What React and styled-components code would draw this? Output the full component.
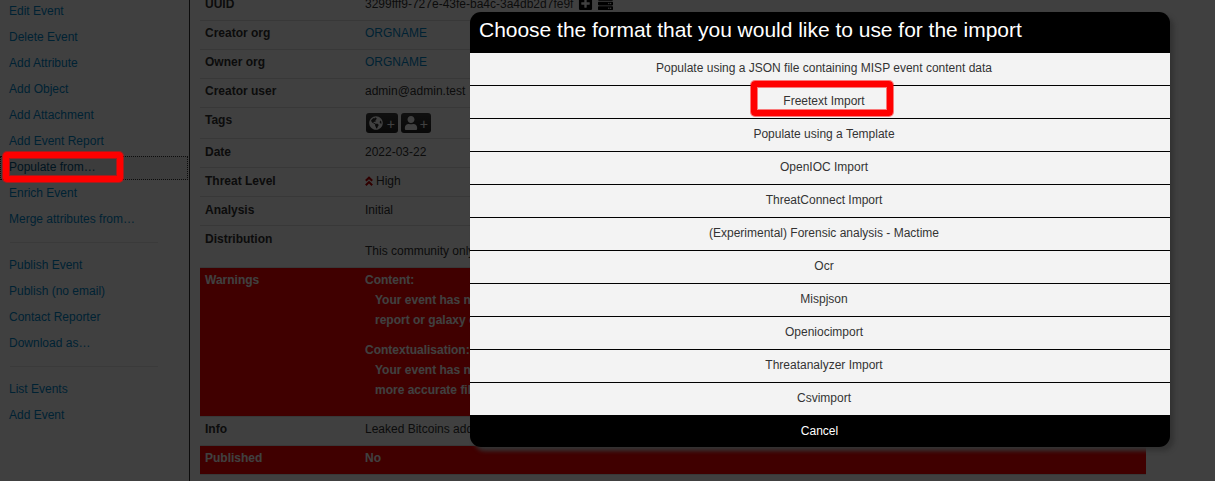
import React from 'react';
import styled, { createGlobalStyle } from 'styled-components';
import { FaGlobeAmericas, FaUser, FaPlusSquare, FaServer } from 'react-icons/fa';

const GlobalStyle = createGlobalStyle`
  * { box-sizing: border-box; }
  body {
    margin: 0;
    background: #fff;
    color: #333;
    font: 12px/20px "Liberation Sans", Arial, Helvetica, sans-serif;
  }
`;

const Page = styled.div`
  position: relative;
  display: flex;
  width: 1215px;
  height: 481px;
  overflow: hidden;
`;

const Sidebar = styled.nav`
  flex: none;
  width: 190px;
  height: 520px;
  margin-top: -2px;
  border-right: 1px solid #333;
`;

const MenuItem = styled.a`
  display: block;
  height: 26px;
  padding: 3px 9px;
  color: ${(p) => (p.$active ? '#005580' : '#0088cc')};
`;

const FocusItem = styled(MenuItem)`
  height: 24px;
  margin: 2px 1px 0 0;
  padding-top: 1px;
  background: #eee;
  outline: 1px dotted #333;
  outline-offset: -1px;
`;

const Divider = styled.hr`
  height: 1px;
  margin: 10px 31px 9px 10px;
  border: 0;
  background: #e5e5e5;
`;

const Details = styled.dl`
  flex: none;
  width: 946px;
  margin: -9px 0 0 10px;
`;

const Row = styled.div`
  display: flex;
  height: ${(p) => p.$height || 29}px;
  padding: ${(p) => (p.$low ? 3 : 2)}px 5px 0;
  border-top: 1px solid #ddd;
  color: ${(p) => (p.$alert ? '#fff' : '#333')};
  background: ${(p) => (p.$alert ? '#f00' : 'transparent')};
  font-weight: ${(p) => (p.$alert ? 'bold' : 'normal')};
`;

const Label = styled.dt`
  flex: none;
  width: 160px;
  font-weight: bold;
`;

const Value = styled.dd`
  flex: 1;
  margin: 0;
  padding-top: ${(p) => p.$drop || 0}px;
  white-space: nowrap;
`;

const OrgLink = styled.a`
  color: #08c;
`;

const UuidIcons = styled.span`
  display: inline-flex;
  gap: 5px;
  margin-left: 5px;
  vertical-align: -3px;
  color: #000;
  font-size: 15px;
`;

const TagButtons = styled.div`
  display: flex;
  gap: 3px;
  margin: 3px 0 0 1px;
`;

const TagButton = styled.span`
  display: flex;
  align-items: center;
  justify-content: space-between;
  width: ${(p) => p.$width}px;
  height: 20px;
  padding: 0 3px;
  border-radius: 3px;
  background: linear-gradient(#404040, #222);
  color: #fff;
  font-size: 14px;
`;

const PersonIcon = styled(FaUser)`
  width: 14px;
`;

const Plus = styled.span`
  padding-top: 3px;
  font-size: 14px;
  line-height: 17px;
`;

const ThreatIcon = styled.svg`
  width: 8px;
  height: 10px;
  margin-right: 3px;
  vertical-align: -1px;
  fill: none;
  stroke: #c00000;
  stroke-width: 2.1;
`;

const Warning = styled.div`
  margin-bottom: 10px;
`;

const WarningText = styled.div`
  padding-left: 10px;
`;

const Backdrop = styled.div`
  position: absolute;
  inset: 0;
  background: rgba(0, 0, 0, 0.75);
`;

const Modal = styled.section`
  position: absolute;
  top: 12px;
  left: 470px;
  width: 700px;
  height: 435px;
  overflow: hidden;
  border-radius: 11px;
  background: #000;
  box-shadow: 4px 4px 4px #333;
`;

const ModalTitle = styled.h1`
  height: 41px;
  margin: 0;
  padding: 8px 0 0 9px;
  color: #fff;
  font-size: 21px;
  font-weight: normal;
  line-height: 20px;
  letter-spacing: -0.02px;
  white-space: nowrap;
`;

const Option = styled.div`
  height: 33px;
  padding: 5px 0 0 8px;
  border-bottom: 1px solid #000;
  background: #f3f3f3;
  color: #333;
  text-align: center;
`;

const Cancel = styled.div`
  padding: 5px 1px 0 0;
  color: #fff;
  text-align: center;
`;

const Highlight = styled.div`
  position: absolute;
  top: ${(p) => p.$top}px;
  left: ${(p) => p.$left}px;
  width: ${(p) => p.$width}px;
  height: ${(p) => p.$height}px;
  border: 6px solid #f00;
  border-radius: 4px;
  box-shadow: 0 0 0 1px rgba(255, 0, 0, 0.5), inset 0 0 0 1px rgba(255, 0, 0, 0.5);
`;

const options = [
  'Populate using a JSON file containing MISP event content data',
  'Freetext Import',
  'Populate using a Template',
  'OpenIOC Import',
  'ThreatConnect Import',
  '(Experimental) Forensic analysis - Mactime',
  'Ocr',
  'Mispjson',
  'Openiocimport',
  'Threatanalyzer Import',
  'Csvimport',
];

export default function App() {
  return (
    <Page>
      <GlobalStyle />
      <Sidebar>
        {['Edit Event', 'Delete Event', 'Add Attribute', 'Add Object', 'Add Attachment', 'Add Event Report'].map((t) => (
          <MenuItem key={t}>{t}</MenuItem>
        ))}
        <FocusItem $active>Populate from…</FocusItem>
        <MenuItem>Enrich Event</MenuItem>
        <MenuItem>Merge attributes from…</MenuItem>
        <Divider />
        {['Publish Event', 'Publish (no email)', 'Contact Reporter', 'Download as…'].map((t) => (
          <MenuItem key={t}>{t}</MenuItem>
        ))}
        <Divider />
        <MenuItem>List Events</MenuItem>
        <MenuItem>Add Event</MenuItem>
      </Sidebar>

      <Details>
        <Row>
          <Label>UUID</Label>
          <Value>
            3299fff9-727e-43fe-ba4c-3a4db2d7fe9f
            <UuidIcons><FaPlusSquare /><FaServer /></UuidIcons>
          </Value>
        </Row>
        <Row><Label>Creator org</Label><Value><OrgLink>ORGNAME</OrgLink></Value></Row>
        <Row><Label>Owner org</Label><Value><OrgLink>ORGNAME</OrgLink></Value></Row>
        <Row><Label>Creator user</Label><Value>admin@admin.test</Value></Row>
        <Row $height={31}>
          <Label>Tags</Label>
          <Value>
            <TagButtons>
              <TagButton $width={32}><FaGlobeAmericas /><Plus>+</Plus></TagButton>
              <TagButton $width={30}><PersonIcon /><Plus>+</Plus></TagButton>
            </TagButtons>
          </Value>
        </Row>
        <Row $low><Label>Date</Label><Value>2022-03-22</Value></Row>
        <Row $low>
          <Label>Threat Level</Label>
          <Value>
            <ThreatIcon viewBox="0 0 8 10">
              <path d="M0.8 4.8 L4 1.7 L7.2 4.8 M0.8 9.2 L4 6.1 L7.2 9.2" />
            </ThreatIcon>
            High
          </Value>
        </Row>
        <Row $low><Label>Analysis</Label><Value>Initial</Value></Row>
        <Row $low $height={42}><Label>Distribution</Label><Value $drop={12}>This community only</Value></Row>
        <Row $height={149} $alert>
          <Label>Warnings</Label>
          <Value>
            <Warning>
              Content:
              <WarningText>Your event has neither<br />report or galaxy clusters</WarningText>
            </Warning>
            <Warning>
              Contextualisation:
              <WarningText>Your event has no tags<br />more accurate filtering</WarningText>
            </Warning>
          </Value>
        </Row>
        <Row><Label>Info</Label><Value>Leaked Bitcoins addresses</Value></Row>
        <Row $alert><Label>Published</Label><Value>No</Value></Row>
        <Row />
      </Details>

      <Backdrop />
      <Modal>
        <ModalTitle>Choose the format that you would like to use for the import</ModalTitle>
        {options.map((o) => <Option key={o}>{o}</Option>)}
        <Cancel>Cancel</Cancel>
      </Modal>
      <Highlight $top={152} $left={3} $width={120} $height={30} />
      <Highlight $top={81} $left={751} $width={142} $height={35} />
    </Page>
  );
}
